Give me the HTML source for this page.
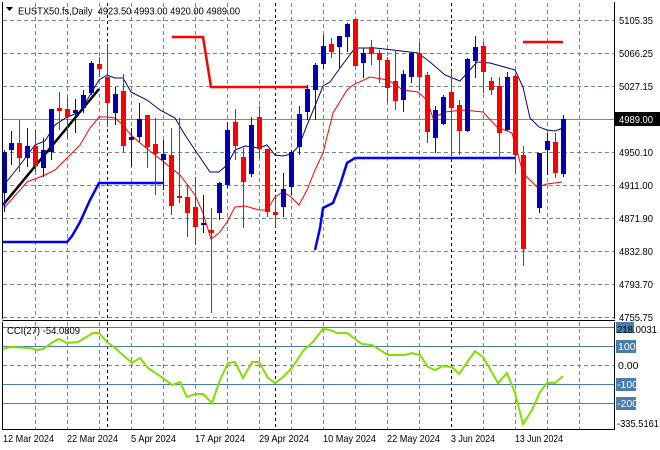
<!DOCTYPE html>
<html><head><meta charset="utf-8"><style>
html,body{margin:0;padding:0;background:#fff}
svg{display:block}
text{font-family:"Liberation Sans",sans-serif;font-size:10.5px;fill:#000}
</style></head><body>
<svg width="660" height="450" viewBox="0 0 660 450" xmlns="http://www.w3.org/2000/svg">
<rect width="660" height="450" fill="#fff"/>
<g stroke="#7a8593" stroke-width="1" stroke-dasharray="4,3">
<path d="M3 20.5H614M3 53.5H614M3 86.5H614M3 152.5H614M3 185.5H614M3 218.5H614M3 251.5H614M3 284.5H614M3 317.5H614"/>
<path d="M35.5 3V318M67.5 3V318M99.5 3V318M131.5 3V318M163.5 3V318M195.5 3V318M227.5 3V318M259.5 3V318M291.5 3V318M323.5 3V318M355.5 3V318M387.5 3V318M419.5 3V318M483.5 3V318M515.5 3V318M547.5 3V318M579.5 3V318"/>
<path d="M35.5 322V429M67.5 322V429M99.5 322V429M131.5 322V429M163.5 322V429M195.5 322V429M227.5 322V429M259.5 322V429M291.5 322V429M323.5 322V429M355.5 322V429M387.5 322V429M419.5 322V429M483.5 322V429M515.5 322V429M547.5 322V429M579.5 322V429"/>
<path d="M3 365.5H614"/>
</g>
<g stroke="#000" stroke-width="1" stroke-dasharray="3,3">
<path d="M107.5 3V318M275.5 3V318M451.5 3V318M107.5 322V429M275.5 322V429M451.5 322V429"/>
</g>
<path d="M3 119.5H614" stroke="#808890" stroke-width="1"/>
<g stroke="#4a7cae" stroke-width="1">
<path d="M3 327.5H614M3 346.5H614M3 384.5H614M3 403.5H614"/>
</g>
<polyline points="3,242 67,242 72,236 80,222 90,200 99,183 163,183" fill="none" stroke="#0000ff" stroke-width="2.5"/>
<polyline points="315,250 320,228 323,208 333,203 340,185 347,163 355,158 515,158" fill="none" stroke="#0000ff" stroke-width="2.5"/>
<polyline points="172,37 203,37 211,87 307,87" fill="none" stroke="#ff0000" stroke-width="2.5"/>
<polyline points="523,42 563,42" fill="none" stroke="#ff0000" stroke-width="2.5"/>
<line x1="3" y1="205" x2="99" y2="89" stroke="#000" stroke-width="2.5"/>
<polyline fill="none" stroke="#000080" stroke-width="1" points="4,185 20,165 35,145 45,141 55,125 67,117 80,112 90,95 99,80 107,75 115,78 123,78 131,92 147,100 160,110 175,118 185,135 195,150 210,172 219,172 227,165 235,150 245,146 259,148 267,145 275,155 283,156 291,154 299,146 307,125 315,106 323,86 330,82 340,68 355,48 375,48 393,50 418,53 430,62 445,75 460,81 477,62 490,63 515,70 523,87 530,118 539,127 547,130 555,131 563,128"/>
<polyline fill="none" stroke="#ff0000" stroke-width="1" points="4,208 27,182 45,175 55,170 67,158 80,145 90,128 99,117 107,117 115,118 123,125 131,135 139,142 155,155 165,163 180,175 195,195 203,213 211,239 219,233 227,222 235,207 245,206 259,210 267,210 275,197 283,192 291,197 299,205 307,190 315,170 323,153 333,113 347,90 353,85 370,77 388,80 403,90 418,92 427,100 433,118 445,112 463,110 483,112 497,127 512,133 523,173 537,187 547,184 562,182"/>
<g>
<g stroke-width="1">
<path stroke="#0000e0" d="M4.5 150V212M11.5 131V165M27.5 128V167M43.5 138V177M51.5 109V160M75.5 99V133M83.5 90V113M91.5 61V95M115.5 87V125M131.5 128V167M139.5 103V142M163.5 140V190M203.5 195V233M219.5 182V220M227.5 122V188M251.5 117V177M283.5 173V217M291.5 150V195M299.5 106V155M307.5 85V120M315.5 63V120M323.5 35V69M339.5 36V68M347.5 23V52M363.5 48V78M403.5 70V112M411.5 52V83M435.5 106V153M443.5 95V125M467.5 58V132M475.5 36V78M507.5 72V131M539.5 153V213M547.5 133V175M563.5 115V177"/>
<path stroke="#ff0000" d="M19.5 120V172M35.5 130V172M59.5 92V130M67.5 97V138M99.5 57V77M107.5 44V127M123.5 74V152M147.5 115V168M155.5 118V195M171.5 128V215M179.5 118V203M187.5 185V237M195.5 177V245M211.5 208V313M235.5 109V160M243.5 148V228M259.5 106V159M267.5 149V217M275.5 197V227M331.5 38V58M355.5 19V66M371.5 40V65M379.5 50V83M387.5 57V103M395.5 50V110M419.5 42V90M427.5 72V143M451.5 71V156M459.5 100V155M483.5 42V93M491.5 77V95M499.5 77V159M515.5 74V173M523.5 146V266M555.5 133V178"/>
</g>
<g fill="#0000b0">
<rect x="3" y="152" width="4" height="41"/><rect x="9" y="143" width="5" height="7"/><rect x="25" y="146" width="5" height="12"/><rect x="41" y="150" width="5" height="18"/><rect x="49" y="109" width="5" height="43"/><rect x="73" y="110" width="5" height="3"/><rect x="81" y="95" width="5" height="13"/><rect x="89" y="63" width="5" height="30"/><rect x="113" y="94" width="5" height="19"/><rect x="129" y="137" width="5" height="3"/><rect x="137" y="119" width="5" height="18"/><rect x="161" y="154" width="5" height="6"/><rect x="201" y="223" width="5" height="2"/><rect x="217" y="183" width="5" height="30"/><rect x="225" y="130" width="5" height="55"/><rect x="249" y="125" width="5" height="49"/><rect x="281" y="189" width="5" height="18"/><rect x="289" y="152" width="5" height="35"/><rect x="297" y="114" width="5" height="33"/><rect x="305" y="89" width="5" height="23"/><rect x="313" y="65" width="5" height="25"/><rect x="321" y="46" width="5" height="18"/><rect x="337" y="36" width="5" height="11"/><rect x="345" y="24" width="5" height="13"/><rect x="361" y="53" width="5" height="10"/><rect x="401" y="74" width="5" height="26"/><rect x="409" y="53" width="5" height="24"/><rect x="433" y="110" width="5" height="28"/><rect x="441" y="97" width="5" height="27"/><rect x="465" y="59" width="5" height="72"/><rect x="473" y="47" width="5" height="14"/><rect x="505" y="77" width="5" height="53"/><rect x="537" y="153" width="5" height="55"/><rect x="545" y="141" width="5" height="9"/><rect x="561" y="119" width="5" height="55"/>
</g>
<g fill="#ff0000">
<rect x="17" y="143" width="5" height="15"/><rect x="33" y="146" width="5" height="20"/><rect x="57" y="108" width="5" height="3"/><rect x="65" y="109" width="5" height="8"/><rect x="97" y="64" width="5" height="5"/><rect x="105" y="77" width="5" height="26"/><rect x="121" y="91" width="5" height="55"/><rect x="145" y="115" width="5" height="32"/><rect x="153" y="144" width="5" height="10"/><rect x="169" y="155" width="5" height="51"/><rect x="177" y="196" width="5" height="2"/><rect x="185" y="197" width="5" height="16"/><rect x="193" y="207" width="5" height="20"/><rect x="209" y="230" width="5" height="3"/><rect x="233" y="122" width="5" height="24"/><rect x="241" y="157" width="5" height="25"/><rect x="257" y="117" width="5" height="32"/><rect x="265" y="149" width="5" height="63"/><rect x="273" y="212" width="5" height="3"/><rect x="329" y="44" width="5" height="8"/><rect x="353" y="19" width="5" height="47"/><rect x="369" y="47" width="5" height="7"/><rect x="377" y="53" width="5" height="7"/><rect x="385" y="60" width="5" height="28"/><rect x="393" y="81" width="5" height="20"/><rect x="417" y="53" width="5" height="24"/><rect x="425" y="75" width="5" height="57"/><rect x="449" y="92" width="5" height="16"/><rect x="457" y="105" width="5" height="26"/><rect x="481" y="46" width="5" height="26"/><rect x="489" y="81" width="5" height="9"/><rect x="497" y="86" width="5" height="47"/><rect x="513" y="76" width="5" height="79"/><rect x="521" y="155" width="5" height="94"/><rect x="553" y="142" width="5" height="31"/>
</g>
</g>
<polyline fill="none" stroke="#7fe000" stroke-width="2" points="3,349 10,347 30,348 37,350 43,349 53,342 59,339 67,343 78,342 93,333 99,333 107,342 115,348 132,363 140,358 148,368 163,378 172,385 180,382 187,397 195,394 203,394 212,403 220,380 228,363 235,362 243,378 252,362 259,362 268,378 275,383 283,377 292,368 303,351 313,342 323,329 330,330 337,333 347,333 362,344 372,345 388,355 405,355 412,353 420,355 428,367 435,370 443,366 452,367 459,374 475,351 483,357 498,383 507,373 515,393 523,424 532,410 540,392 547,383 555,383 563,376"/>
<g fill="none" stroke="#000" stroke-width="1">
<path d="M2.5 2V319M614.5 2V319M2.5 320.5H615M2.5 322V430M614.5 322V430M2.5 429.5H615"/>
</g>
<path d="M6 7L13 7L9.5 11Z" fill="#000"/>
<text x="18" y="14.5" textLength="222" lengthAdjust="spacingAndGlyphs" xml:space="preserve">EUSTX50.fs,Daily  4923.50 4993.00 4920.00 4989.00</text>
<text x="7" y="334" textLength="73" lengthAdjust="spacingAndGlyphs">CCI(27) -54.0809</text>
<g>
<text x="619" y="24" textLength="34" lengthAdjust="spacingAndGlyphs">5105.35</text>
<text x="619" y="57" textLength="34" lengthAdjust="spacingAndGlyphs">5066.25</text>
<text x="619" y="90" textLength="34" lengthAdjust="spacingAndGlyphs">5027.15</text>
<rect x="615" y="112" width="45" height="14" fill="#000"/>
<text x="619" y="123" style="fill:#fff" textLength="34" lengthAdjust="spacingAndGlyphs">4989.00</text>
<text x="619" y="156" textLength="34" lengthAdjust="spacingAndGlyphs">4950.10</text>
<text x="619" y="189" textLength="34" lengthAdjust="spacingAndGlyphs">4911.00</text>
<text x="619" y="222" textLength="34" lengthAdjust="spacingAndGlyphs">4871.90</text>
<text x="619" y="255" textLength="34" lengthAdjust="spacingAndGlyphs">4832.80</text>
<text x="619" y="288" textLength="34" lengthAdjust="spacingAndGlyphs">4793.70</text>
<text x="619" y="321" textLength="34" lengthAdjust="spacingAndGlyphs">4755.75</text>
</g>
<g fill="#4a7cae">
<rect x="616" y="322" width="18" height="11"/>
<rect x="616" y="340" width="20" height="13"/>
<rect x="616" y="378" width="20" height="13"/>
<rect x="616" y="397" width="20" height="13"/>
</g>
<text x="617" y="333" textLength="40" lengthAdjust="spacingAndGlyphs">218.0031</text>
<text x="618" y="350" style="fill:#fff">100</text>
<text x="618" y="369">0.00</text>
<text x="617" y="388" style="fill:#fff">-100</text>
<text x="617" y="407" style="fill:#fff">-200</text>
<text x="617" y="427" textLength="42" lengthAdjust="spacingAndGlyphs">-335.5161</text>
<g>
<text x="3" y="442" textLength="51" lengthAdjust="spacingAndGlyphs">12 Mar 2024</text>
<text x="67" y="442" textLength="51" lengthAdjust="spacingAndGlyphs">22 Mar 2024</text>
<text x="131" y="442" textLength="45" lengthAdjust="spacingAndGlyphs">5 Apr 2024</text>
<text x="195" y="442" textLength="50" lengthAdjust="spacingAndGlyphs">17 Apr 2024</text>
<text x="259" y="442" textLength="50" lengthAdjust="spacingAndGlyphs">29 Apr 2024</text>
<text x="323" y="442" textLength="53" lengthAdjust="spacingAndGlyphs">10 May 2024</text>
<text x="387" y="442" textLength="53" lengthAdjust="spacingAndGlyphs">22 May 2024</text>
<text x="451" y="442" textLength="44" lengthAdjust="spacingAndGlyphs">3 Jun 2024</text>
<text x="515" y="442" textLength="48" lengthAdjust="spacingAndGlyphs">13 Jun 2024</text>
</g>
</svg>
</body></html>
